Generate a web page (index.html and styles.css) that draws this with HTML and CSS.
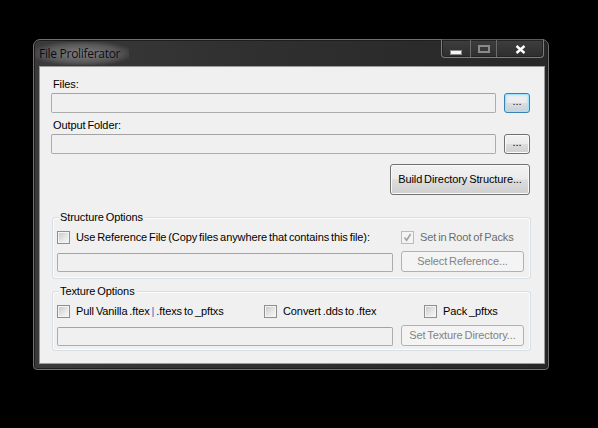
FILE: index.html
```html
<!DOCTYPE html>
<html>
<head>
<meta charset="utf-8">
<title>File Proliferator</title>
<link rel="stylesheet" href="styles.css">
</head>
<body>
<div class="win">
  <div class="titlebar">
    <span class="title">File Proliferator</span>
    <div class="caps">
      <div class="cap cap-min"><span class="g-min"></span></div>
      <div class="cap cap-max"><span class="g-max"></span></div>
      <div class="cap cap-close">
        <svg width="11" height="9" viewBox="0 0 11 9"><path d="M1.5 1 L9.5 8 M9.5 1 L1.5 8" stroke="#fff" stroke-width="2.4" fill="none"/></svg>
      </div>
    </div>
  </div>
  <div class="client">
    <div class="lbl lbl-first">Files:</div>
    <div class="path-row">
      <div class="tb tb-path"></div>
      <button class="btn btn-dots btn-focus">...</button>
    </div>
    <div class="lbl">Output Folder:</div>
    <div class="path-row">
      <div class="tb tb-path"></div>
      <button class="btn btn-dots">...</button>
    </div>
    <div class="actions">
      <button class="btn btn-build">Build Directory Structure...</button>
    </div>

    <div class="group group-structure">
      <div class="gtitle">Structure Options</div>
      <div class="checks">
        <label class="chk chk-ref"><span class="box"></span>Use Reference File (Copy files anywhere that contains this file):</label>
        <label class="chk chk-dis"><span class="box box-dis"><svg width="11" height="11" viewBox="0 0 11 11"><path d="M2.5 5.5 L4.6 8.3 L8.6 2" stroke="#a3a3a3" stroke-width="1.6" fill="none"/></svg></span>Set in Root of Packs</label>
      </div>
      <div class="inputs">
        <div class="tb tb-group"></div>
        <button class="btn btn-dis btn-group">Select Reference...</button>
      </div>
    </div>

    <div class="group group-texture">
      <div class="gtitle">Texture Options</div>
      <div class="checks">
        <label class="chk chk-pull"><span class="box"></span><span>Pull Vanilla .ftex <span class="bar">|</span> .ftexs to _pftxs</span></label>
        <label class="chk chk-conv"><span class="box"></span>Convert .dds to .ftex</label>
        <label class="chk"><span class="box"></span>Pack _pftxs</label>
      </div>
      <div class="inputs">
        <div class="tb tb-group"></div>
        <button class="btn btn-dis btn-group">Set Texture Directory...</button>
      </div>
    </div>
  </div>
</div>
</body>
</html>
```

FILE: styles.css
```css
* { box-sizing: border-box; }
html, body {
  margin: 0;
  padding: 0;
  background: #000;
  width: 598px;
  height: 428px;
  overflow: hidden;
}
body {
  font-family: "Liberation Sans", Arial, sans-serif;
  font-size: 11px;
  letter-spacing: -0.1px;
  word-spacing: -1px;
  color: #000;
}

/* window frame */
.win {
  margin: 39px 0 0 33px;
  width: 516px;
  height: 331px;
  border: 1px solid #707070;
  border-radius: 7px 7px 4px 4px;
  background: linear-gradient(90deg, #3a3a3a 0%, #303030 40%, #272727 100%);
  box-shadow: inset 0 0 0 1px #1e1e1e;
  padding: 0 3px 5px 5px;
  display: flex;
  flex-direction: column;
}
.titlebar {
  height: 26px;
  display: flex;
  align-items: center;
  flex: none;
}
.title {
  margin-left: -4px;
  padding: 3px 9px 3px 4px;
  font-family: "Open Sans", "Noto Sans", sans-serif;
  font-size: 12px;
  letter-spacing: -0.3px;
  word-spacing: 0;
  color: #0c0c1c;
  background: radial-gradient(ellipse at center, rgba(140,140,140,0.85) 0%, rgba(110,110,110,0.6) 55%, rgba(60,60,60,0) 80%);
}
.caps {
  margin-left: auto;
  margin-right: 1px;
  align-self: flex-start;
  margin-top: -1px;
  height: 19px;
  display: flex;
  border: 1px solid #7c7c7c;
  border-top-color: #5a5a5a;
  border-radius: 0 0 4px 4px;
  background: linear-gradient(180deg, #3e3e3e 0%, #2e2e2e 100%);
  box-shadow: inset 0 0 0 1px #232323;
}
.cap {
  display: flex;
  align-items: center;
  justify-content: center;
  height: 100%;
}
.cap + .cap { border-left: 1px solid #6c6c6c; }
.cap-min { width: 28px; }
.cap-max { width: 26px; }
.cap-close { width: 47px; padding-top: 1px; }
.g-min {
  width: 12px;
  height: 5px;
  margin-top: 8px;
  background: #f4f4f4;
  border: 1px solid #8a8a8a;
}
.g-max {
  width: 12px;
  height: 8px;
  margin-top: 1px;
  border: 2px solid #8a8a8a;
  background: #3a3a3a;
}
.cap-close svg { display: block; }

/* client area */
.client {
  flex: 1;
  border: 1px solid #9b9b9b;
  background: #f0f0f0;
  padding: 11px 14px 0 11px;
  display: flex;
  flex-direction: column;
}
.lbl {
  height: 13px;
  line-height: 13px;
  margin-top: 6px;
  margin-left: 2px;
}
.lbl-first { margin-top: 0; }
.path-row {
  margin-top: 2px;
  height: 20px;
  display: flex;
  gap: 8px;
}
.tb {
  border: 1px solid #acacac;
  border-top-color: #a3a3a3;
  border-radius: 2px;
  background: #f0f0f0;
}
.tb-path { width: 445px; height: 20px; }

.btn {
  font-family: "Liberation Sans", Arial, sans-serif;
  font-size: 11px;
  letter-spacing: -0.1px;
  word-spacing: -1px;
  color: #000;
  padding: 0;
  margin: 0;
  border: 1px solid #707070;
  border-radius: 3px;
  background: linear-gradient(180deg, #f2f2f2 0%, #ebebeb 48%, #dddddd 52%, #cfcfcf 100%);
  box-shadow: inset 0 0 0 1px #fbfbfb;
  line-height: 1;
}
.btn-dots { width: 26px; height: 20px; padding-bottom: 3px; }
.btn-focus {
  border-color: #3c7fb1;
  box-shadow: inset 0 0 0 1px #9ee3fb, inset 0 0 2px 2px rgba(170,225,250,0.55);
  color: #200020;
}
.actions {
  margin-top: 10px;
  display: flex;
  justify-content: flex-end;
}
.btn-build { width: 140px; height: 31px; }

.btn-dis {
  border-color: #adb2b5;
  background: #f4f4f4;
  box-shadow: none;
  color: #838383;
}

/* groups */
.group {
  position: relative;
  margin-left: 1px;
  width: 479px;
  border: 1px solid #d5dfe5;
  border-radius: 3px;
  box-shadow: inset 0 0 0 1px #fcfcfc;
  padding: 13px 6px 6px 4px;
}
.group-structure { margin-top: 22px; }
.group-texture { margin-top: 12px; padding-bottom: 4px; }
.gtitle {
  position: absolute;
  top: -7px;
  left: 6px;
  height: 13px;
  line-height: 13px;
  padding: 0 2px 0 1px;
  background: #f0f0f0;
}
.checks {
  display: flex;
  height: 13px;
  align-items: center;
}
.chk {
  display: flex;
  align-items: center;
  gap: 6px;
  height: 13px;
  line-height: 13px;
  white-space: nowrap;
}
.chk-ref { width: 344px; }
.chk-pull { width: 207px; }
.chk-conv { width: 160px; }
.chk-dis { color: #6d6d6d; }
.bar { color: #2f6fc0; }
.box {
  flex: none;
  width: 13px;
  height: 13px;
  border: 1px solid #8e8f8f;
  background: linear-gradient(135deg, #c6c6c6 0%, #e6e6e6 55%, #f8f8f8 100%);
  box-shadow: inset 0 0 0 1px #f4f4f4;
}
.box-dis {
  border-color: #bcbcbc;
  background: #f4f4f4;
  box-shadow: none;
}
.box-dis svg { display: block; }
.inputs {
  margin-top: 7px;
  display: flex;
  align-items: flex-end;
  gap: 8px;
}
.tb-group { width: 336px; height: 19px; }
.btn-group { width: 123px; height: 21px; }
```
